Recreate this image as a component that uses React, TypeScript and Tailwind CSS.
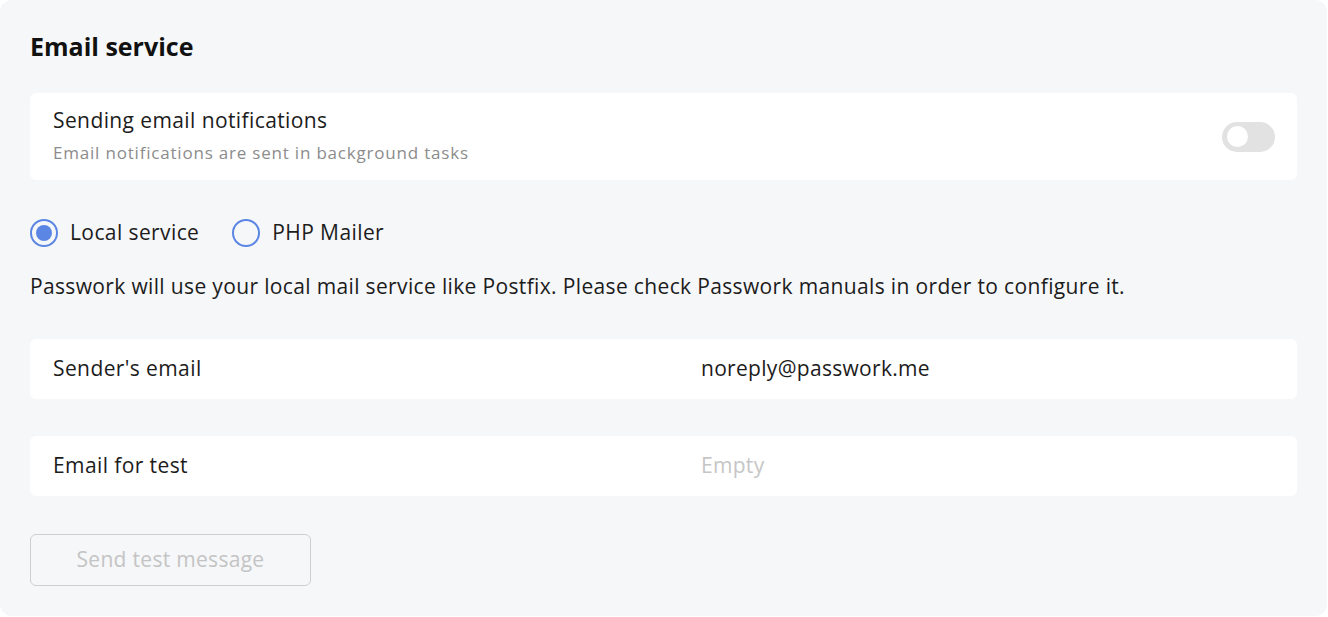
import { useState } from 'react';

function Radio({ checked, label, onClick }: { checked: boolean; label: string; onClick: () => void }) {
  return (
    <button type="button" onClick={onClick} className="flex items-center gap-3">
      <span className="flex h-[28px] w-[28px] items-center justify-center rounded-full border-2 border-[#5b86e3]">
        {checked && <span className="h-[16px] w-[16px] rounded-full bg-[#5b86e3]" />}
      </span>
      <span className="text-[21px] tracking-[0.4px] text-[#1c1c1c]">{label}</span>
    </button>
  );
}

function FieldRow({ label, value, placeholder }: { label: string; value: string; placeholder: string }) {
  return (
    <div className="flex h-[60px] items-center rounded-md bg-white pl-[23px]">
      <span className="w-[648px] text-[21px] tracking-[0.4px] text-[#1c1c1c]">{label}</span>
      <input
        defaultValue={value}
        placeholder={placeholder}
        className="flex-1 bg-transparent pr-6 text-[21px] tracking-[0.3px] text-[#1c1c1c] outline-none placeholder:text-[#c6c6c6]"
      />
    </div>
  );
}

export default function App() {
  const [enabled, setEnabled] = useState(false);
  const [mode, setMode] = useState<'local' | 'php'>('local');

  return (
    <div className="h-[617px] w-[1328px] bg-white font-['Open_Sans',sans-serif]">
      <div className="h-[616px] w-[1327px] rounded-xl bg-[#f6f7f9] px-[30px] pt-[31px]">
        <h2 className="text-[25px] font-bold leading-[30px] text-[#111]">Email service</h2>

        {/* Notifications toggle */}
        <div className="mt-[32px] flex h-[87px] items-center justify-between rounded-md bg-white pl-[23px] pr-[22px]">
          <div className="pb-[3px]">
            <p className="text-[21px] leading-[26px] tracking-[0.4px] text-[#1c1c1c]">Sending email notifications</p>
            <p className="mt-[10px] text-[17px] leading-[20px] tracking-[0.8px] text-[#8c8c8c]">Email notifications are sent in background tasks</p>
          </div>
          <button
            type="button"
            onClick={() => setEnabled(!enabled)}
            className={`flex h-[30px] w-[53px] items-center rounded-full px-[5px] ${enabled ? 'justify-end bg-[#5b86e3]' : 'bg-[#e2e2e2]'}`}
          >
            <span className="h-[21px] w-[21px] rounded-full bg-white" />
          </button>
        </div>

        {/* Service choice */}
        <div className="mt-[37px] flex items-center gap-[33px]">
          <Radio checked={mode === 'local'} label="Local service" onClick={() => setMode('local')} />
          <Radio checked={mode === 'php'} label="PHP Mailer" onClick={() => setMode('php')} />
        </div>

        <p className="mt-[24px] text-[21px] leading-[26px] tracking-[0.35px] text-[#1c1c1c]">
          Passwork will use your local mail service like Postfix. Please check Passwork manuals in order to configure it.
        </p>

        <div className="mt-[40px] flex flex-col gap-[37px]">
          <FieldRow label="Sender's email" value="noreply@passwork.me" placeholder="Empty" />
          <FieldRow label="Email for test" value="" placeholder="Empty" />
        </div>

        <button
          type="button"
          disabled
          className="mt-[38px] h-[52px] w-[281px] rounded-md border border-[#cfcfcf] text-[21px] tracking-[0.3px] text-[#c4c4c4]"
        >
          Send test message
        </button>
      </div>
    </div>
  );
}
